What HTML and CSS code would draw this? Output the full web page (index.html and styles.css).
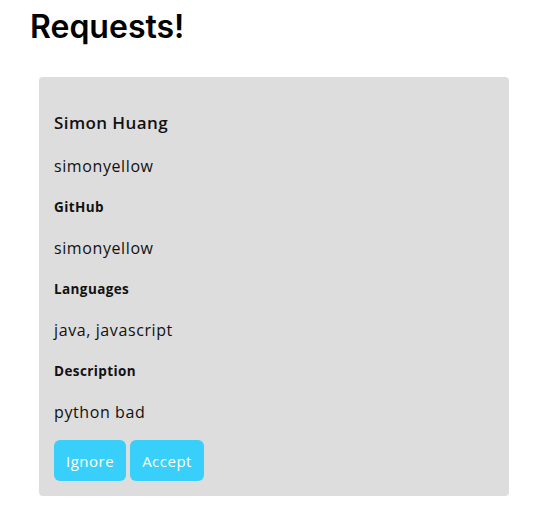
FILE: index.html
```html
<!DOCTYPE html>
<html lang="en">
<head>
<meta charset="utf-8">
<title>Requests</title>
<link rel="stylesheet" href="styles.css">
</head>
<body>
  <main class="page">
    <h1 class="page-title">Requests!</h1>
    <section class="request-list">
      <article class="request-card">
        <p class="name">Simon Huang</p>
        <p class="value username">simonyellow</p>
        <p class="label">GitHub</p>
        <p class="value">simonyellow</p>
        <p class="label">Languages</p>
        <p class="value">java, javascript</p>
        <p class="label">Description</p>
        <p class="value">python bad</p>
        <div class="actions">
          <button class="btn" type="button">Ignore</button>
          <button class="btn" type="button">Accept</button>
        </div>
      </article>
    </section>
  </main>
</body>
</html>
```
FILE: styles.css
```css
* { box-sizing: border-box; }

body {
  margin: 0;
  background: #ffffff;
  color: #111111;
  font-family: "Open Sans", "DejaVu Sans", sans-serif;
}

.page {
  padding: 8px 0 0 30px;
}

.page-title {
  margin: 0;
  font-family: Inter, "Noto Sans", sans-serif;
  font-weight: 600;
  font-size: 32px;
  line-height: 38px;
  color: #000000;
}

.request-list {
  padding: 31px 0 0 9px;
}

.request-card {
  width: 470px;
  background: #dddddd;
  border-radius: 4px;
  padding: 36px 15px 15px;
  display: flex;
  flex-direction: column;
  gap: 21px;
}

.request-card p {
  margin: 0;
  line-height: 20px;
}

.name {
  font-size: 17px;
  font-weight: 600;
  letter-spacing: 0.4px;
}

.username {
  margin-top: 2px !important;
}

.value {
  font-size: 16px;
  letter-spacing: 0.6px;
}

.label {
  font-size: 13.5px;
  font-weight: 700;
  letter-spacing: 0.4px;
}

.actions {
  display: flex;
  gap: 4px;
  margin-top: -3px;
}

.btn {
  height: 41px;
  padding: 0 12px;
  border: none;
  border-radius: 6px;
  background: #38cffb;
  color: #ffffff;
  font-family: inherit;
  font-size: 15px;
  letter-spacing: 0.5px;
}
```
